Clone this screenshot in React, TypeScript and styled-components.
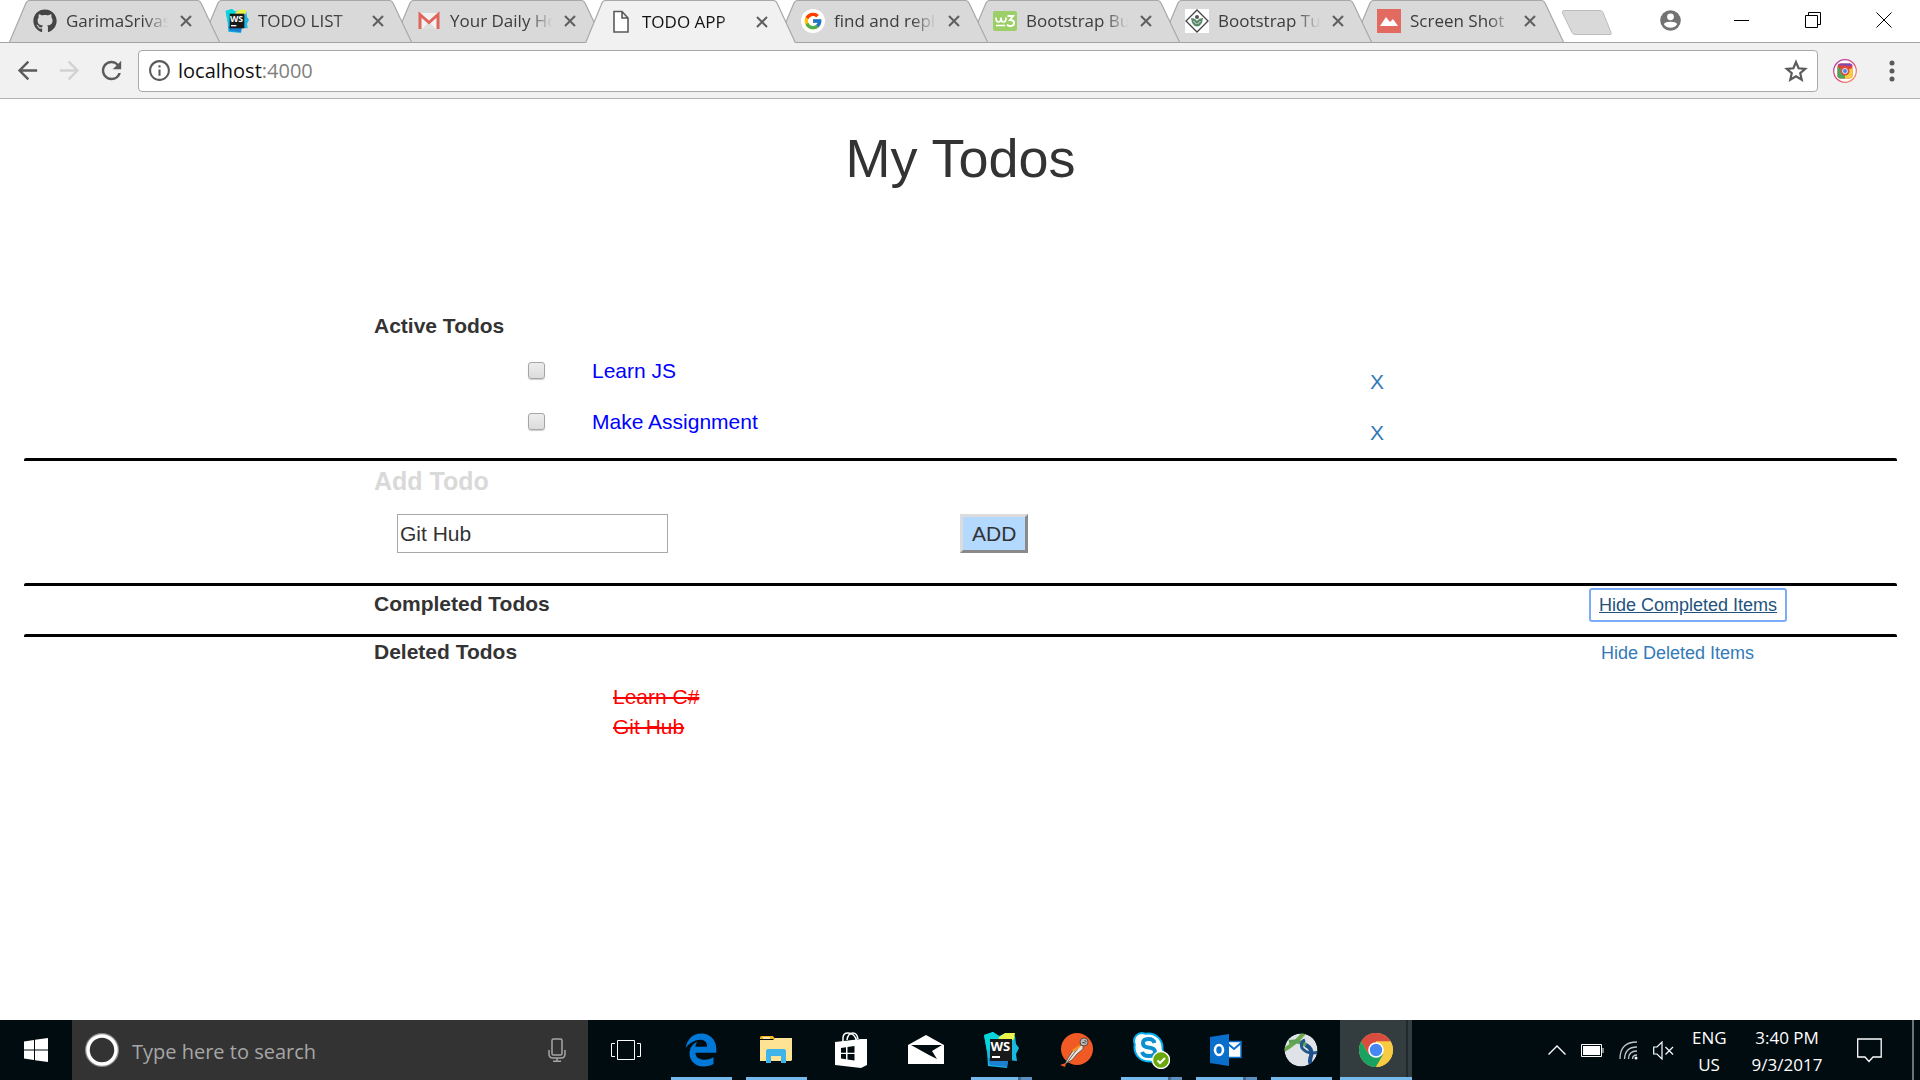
import React, { useState } from "react";
import styled, { createGlobalStyle, css } from "styled-components";
import { MdArrowBack, MdArrowForward, MdInfoOutline, MdRefresh } from "react-icons/md";
import { FaGithub, FaEdgeLegacy } from "react-icons/fa6";
import { FcGoogle } from "react-icons/fc";

const GlobalStyle = createGlobalStyle`
  *, *::before, *::after { box-sizing: border-box; }
  body {
    margin: 0;
    background: #fff;
    color: #333;
    font: 21px/30px "Liberation Sans", Arial, sans-serif;
  }
  button, input { font: inherit; color: inherit; margin: 0; }
`;

const uiFont = `"Open Sans", "Segoe UI", sans-serif`;

const Desktop = styled.div`
  display: flex;
  flex-direction: column;
  min-height: 100vh;
`;

/* ---------- browser chrome ---------- */

const TabStrip = styled.header`
  display: flex;
  align-items: flex-start;
  height: 43px;
  padding: 0 1px 0 9px;
  background: #fff;
  border-bottom: 1px solid #a3a3a3;
  font-family: ${uiFont};
`;

const TabList = styled.nav`
  display: flex;
  margin-right: 16px;
`;

const TabItem = styled.div<{ $active?: boolean; $order: number }>`
  position: relative;
  z-index: ${(p) => (p.$active ? 20 : p.$order)};
  display: flex;
  align-items: center;
  width: 211px;
  height: ${(p) => (p.$active ? 43 : 42)}px;
  margin-right: -19px;
  padding: 0 22px 0 24px;
  color: ${(p) => (p.$active ? "#111" : "#3c3c3c")};
`;

const TabShape = styled.svg`
  position: absolute;
  inset: 0;
  z-index: -1;
  width: 100%;
  height: 100%;
`;

const TabIcon = styled.span`
  display: flex;
  width: 24px;
  height: 24px;
  margin-right: 9px;
  svg { width: 24px; height: 24px; }
`;

const TabTitle = styled.a`
  flex: 1;
  height: 24px;
  color: inherit;
  font-size: 17px;
  line-height: 24px;
  text-decoration: none;
  white-space: nowrap;
  mask-image: linear-gradient(to right, #000 72%, transparent 95%);
`;

const TabClose = styled.button`
  display: flex;
  align-items: center;
  justify-content: center;
  width: 24px;
  height: 24px;
  padding: 0;
  border: 0;
  background: none;
`;

const NewTab = styled.button`
  width: 52px;
  height: 26px;
  margin-top: 10px;
  padding: 0;
  border: 0;
  background: none;
  svg { display: block; }
`;

const WindowControls = styled.div`
  display: flex;
  align-items: center;
  height: 40px;
  margin-left: auto;
`;

const WindowButton = styled.button`
  display: flex;
  align-items: center;
  justify-content: center;
  width: 71px;
  height: 40px;
  padding: 0;
  border: 0;
  background: none;
`;

const Toolbar = styled.div`
  display: flex;
  align-items: center;
  height: 56px;
  padding: 0 4px 0 12px;
  background: #f1f1f1;
  border-bottom: 1px solid #b3b3b3;
  font-family: ${uiFont};
`;

const ToolButton = styled.button<{ $faded?: boolean; $width?: number }>`
  display: flex;
  align-items: center;
  justify-content: center;
  width: ${(p) => p.$width ?? 30}px;
  height: 30px;
  margin-right: 12px;
  padding: 0;
  border: 0;
  background: none;
  color: ${(p) => (p.$faded ? "#d2d2d2" : "#5a5a5a")};
`;

const AddressBar = styled.div`
  display: flex;
  flex: 1;
  align-items: center;
  height: 42px;
  padding: 0 8px;
  margin-right: 4px;
  background: #fff;
  border: 1px solid #a9a9a9;
  border-radius: 4px;
  color: #5a5a5a;
  a {
    flex: 1;
    margin-left: 6px;
    color: #808080;
    font-size: 20px;
    text-decoration: none;
  }
  b { color: #111; font-weight: 400; }
  button { display: flex; padding: 0; border: 0; background: none; }
`;

/* ---------- page ---------- */

const Page = styled.main`
  flex: 1;
  padding: 29px 23px 0 24px;
`;

const PageTitle = styled.h1`
  margin: 0 0 123px;
  font-size: 54px;
  font-weight: 400;
  line-height: 60px;
  text-align: center;
`;

const Section = styled.section<{ $ruled?: boolean; $space?: number }>`
  padding-bottom: ${(p) => p.$space ?? 0}px;
  ${(p) =>
    p.$ruled &&
    css`
      &::before {
        content: "";
        display: block;
        height: 3px;
        border-radius: 2px 2px 0 0;
        background: #000;
      }
    `}
`;

const SectionHead = styled.div<{ $top?: number }>`
  display: grid;
  grid-template-columns: 350fr 1225fr 298fr;
  align-items: baseline;
  height: ${(p) => 45 + (p.$top ?? 0)}px;
  padding-top: ${(p) => p.$top ?? 0}px;
`;

const SectionTitle = styled.h2<{ $muted?: boolean }>`
  grid-column: 2;
  margin: 0;
  font-size: ${(p) => (p.$muted ? 25 : 21)}px;
  font-weight: 700;
  line-height: ${(p) => (p.$muted ? 34 : 30)}px;
  color: ${(p) => (p.$muted ? "#d9d9d9" : "#333")};
`;

const ToggleLink = styled.a<{ $focused?: boolean }>`
  justify-self: start;
  padding: 0 8px;
  margin-left: ${(p) => (p.$focused ? -8 : -6)}px;
  border-radius: 1px;
  font-size: 18px;
  color: ${(p) => (p.$focused ? "#23527c" : "#337ab7")};
  text-decoration: ${(p) => (p.$focused ? "underline" : "none")};
  outline: ${(p) => (p.$focused ? "2px solid #7cacf8" : "none")};
`;

const List = styled.ul`
  margin: 0;
  padding: 0;
  list-style: none;
`;

const TodoRow = styled.li`
  display: grid;
  grid-template-columns: 504fr 64fr 778fr 527fr;
  align-items: start;
  height: 51px;
`;

const Check = styled.input`
  grid-column: 2;
  appearance: none;
  width: 17px;
  height: 17px;
  margin-top: 6px;
  border: 1px solid #a6a6a6;
  border-radius: 3px;
  background: linear-gradient(#ededed, #dcdcdc);
  box-shadow: 0 1px 1px #0003;
  &:checked { background: #777; }
`;

const TodoText = styled.label`
  justify-self: start;
  color: #00f;
`;

const RemoveLink = styled.a`
  justify-self: start;
  margin-top: 11px;
  color: #337ab7;
  text-decoration: none;
`;

const AddForm = styled.form`
  display: grid;
  grid-template-columns: 373fr 271fr 292fr 937fr;
  padding-top: 5px;
`;

const TextBox = styled.input`
  grid-column: 2;
  width: 100%;
  height: 39px;
  padding: 1px 2px;
  border: 1px solid #a9a9a9;
  background: #fff;
`;

const AddButton = styled.button`
  grid-column: 4;
  justify-self: start;
  height: 39px;
  padding: 0 9px;
  border: 3px solid;
  border-color: #dcdcdc #8a8a8a #8a8a8a #dcdcdc;
  background: #b3d9ff;
`;

const DeletedItem = styled.li`
  display: grid;
  grid-template-columns: 589fr 1284fr;
  del { grid-column: 2; color: #f00; }
`;

/* ---------- taskbar ---------- */

const Taskbar = styled.footer`
  display: flex;
  height: 60px;
  background: #000c10;
  color: #fff;
  font-family: ${uiFont};
`;

const StartButton = styled.button`
  display: flex;
  align-items: center;
  justify-content: center;
  width: 72px;
  padding: 0;
  border: 0;
  background: none;
`;

const SearchBox = styled.label`
  display: flex;
  align-items: center;
  width: 516px;
  padding: 0 22px 0 12px;
  background: #333;
  input {
    flex: 1;
    min-width: 0;
    margin: 3px 12px 0;
    padding: 0;
    border: 0;
    outline: 0;
    background: none;
    font-size: 20px;
  }
  input::placeholder { color: #a6a6a6; opacity: 1; }
`;

const Apps = styled.div`
  display: flex;
  gap: 3px;
  padding-left: 2px;
`;

const AppButton = styled.button<{ $running?: boolean; $stacked?: boolean; $current?: boolean }>`
  display: flex;
  align-items: center;
  justify-content: center;
  width: 72px;
  padding: 0;
  border: 0;
  background: ${(p) => (p.$current ? "linear-gradient(to right, #333d40 66px, #22292c 66px, #22292c 68px, #333d40 68px)" : "none")};
  &::after {
    content: "";
    align-self: flex-end;
    height: 3px;
    width: ${(p) => (p.$current ? 72 : 61)}px;
    margin-left: -${(p) => (p.$current ? 72 : 66)}px;
    margin-right: ${(p) => (p.$current ? 0 : 5)}px;
    flex: none;
    background: ${(p) =>
      !p.$running ? "none" : p.$stacked ? "linear-gradient(to right, #76b9ed 47px, #42688a 47px, #42688a 50px, #5b8fbd 50px)" : "#76b9ed"};
  }
`;

const AppGlyph = styled.span`
  display: flex;
  justify-content: center;
  width: 72px;
  flex: none;
`;

const Tray = styled.div`
  display: flex;
  align-items: center;
  margin-left: auto;
  button { display: flex; padding: 0; border: 0; background: none; }
`;

const TrayIcons = styled.div`
  display: flex;
  align-items: center;
  gap: 15px;
  margin-right: 18px;
`;

const TrayText = styled.div<{ $wide?: boolean }>`
  width: ${(p) => (p.$wide ? 122 : 34)}px;
  margin-right: ${(p) => (p.$wide ? 9 : 0)}px;
  padding-top: 2px;
  font-size: 17px;
  line-height: 27px;
  text-align: center;
`;

const DesktopPeek = styled.div`
  align-self: stretch;
  width: 8px;
  margin-left: 30px;
  border-left: 2px solid #6c7375;
`;

/* ---------- drawings ---------- */

const WebStorm = ({ size = 36 }: { size?: number }) => (
  <svg width={size} height={size} viewBox="0 0 36 36">
    <path d="M1 3 10 0l6 4 7-3 9 3 1 8 3 4-3 6 1 7-9-1-1 8-19-2L4 20z" fill="#18b8e0" />
    <path d="M1 3 10 0l6 4-3 10-9 5z" fill="#07d5dc" />
    <path d="m16 5 6-4 10 0-1 6-8 6-9-1z" fill="#e9f34b" />
    <path d="m5 26 20 2-1 7-17-2z" fill="#1b7fd2" />
    <rect x="7" y="7" width="22" height="22" fill="#1a1a1a" />
    <text x="7.500" y="19" fill="#fff" fontFamily="Open Sans, sans-serif" fontWeight="700" fontSize="13">WS</text>
    <path d="M9 25h8" stroke="#fff" strokeWidth="2" />
  </svg>
);

const Gmail = () => (
  <svg viewBox="0 0 24 24">
    <path d="M2 4h20v16H2z" fill="#f2f2f2" />
    <path d="m5 20 7-7 7 7z" fill="#dedede" />
    <path d="M3 20V5.500L12 13.500 21 5.500V20" fill="none" stroke="#e0655b" strokeWidth="3" />
  </svg>
);

const PageFile = () => (
  <svg viewBox="0 0 24 24">
    <path d="M5 1.500h8l6 6.500v14H5zM13 1.500V8h6" fill="#fff" stroke="#5a5a5a" strokeWidth="1.600" />
  </svg>
);

const GoogleBadge = () => (
  <svg viewBox="0 0 24 24">
    <circle cx="12" cy="12" r="12" fill="#fff" />
    <FcGoogle x="2" y="2" size={20} style={{ width: 20, height: 20 }} />
  </svg>
);

const W3 = () => (
  <svg viewBox="0 0 24 24">
    <rect y="2" width="24" height="20" rx="2" fill="#9ccf68" />
    <path d="M3 8.500q0 4.500 2.500 4.500T8 8.500q0 4.500 2.500 4.500T13 8.500M3 16.500h9" fill="none" stroke="#fff" strokeWidth="1.700" />
    <path d="M14.500 7h5.500l-3 4q4 0 4 3t-4 3q-2 0-3-1.500" fill="none" stroke="#fff" strokeWidth="2" />
  </svg>
);

const TutorialDiamond = () => (
  <svg viewBox="0 0 24 24">
    <path d="M0 0h24v24H0z" fill="#fff" />
    <path d="M12 1 23 12 12 23 1 12z" fill="#fff" stroke="#444" strokeWidth="1.300" />
    <path d="M6 9q4 0 6 3 2-3 6-3-1 8.500-6 8.500T6 9z" fill="#5b8a6b" />
    <circle cx="12" cy="8" r="2" fill="#555" />
    <path d="M8.500 12l3 3M15.500 12l-3 3" stroke="#fff" strokeWidth=".8" />
  </svg>
);

const Screenshot = () => (
  <svg viewBox="0 0 24 24">
    <path d="M0 0h24v24H0z" fill="#e36a60" />
    <path d="M3 17 9 8l4 5 3-3 5 7z" fill="#fff" />
  </svg>
);

const Star = () => (
  <svg width="26" height="26" viewBox="0 0 24 24">
    <path
      d="m12 3.800 2.400 5.700 6.100.5-4.600 4 1.400 6-5.300-3.200L6.700 20l1.400-6-4.600-4 6.100-.5z"
      fill="none"
      stroke="#5a5a5a"
      strokeWidth="2"
    />
  </svg>
);

const Avatar = () => (
  <svg width="21" height="21" viewBox="0 0 21 21">
    <circle cx="10.500" cy="10.500" r="10.300" fill="#737373" />
    <circle cx="10.500" cy="6.800" r="3.400" fill="#fff" />
    <path d="M4 14.500q0-2.800 6.500-2.800t6.500 2.800q-2.500 3.300-6.500 3.300T4 14.500z" fill="#fff" />
  </svg>
);

const Instagram = () => (
  <svg width="24" height="24" viewBox="0 0 24 24">
    <defs>
      <linearGradient id="ring" x1="0" x2="1" y1="0" y2="1">
        <stop offset="0" stopColor="#a93aa8" />
        <stop offset=".5" stopColor="#e0457b" />
        <stop offset="1" stopColor="#f5a35c" />
      </linearGradient>
    </defs>
    <circle cx="12" cy="12" r="11.300" fill="#fff" stroke="url(#ring)" strokeWidth="1.200" />
    <rect x="4.500" y="4.500" width="15" height="15" rx="3" fill="#de4639" />
    <path d="M4.500 8v8.500q0 3 3 3H12V12z" fill="#4ba85a" />
    <path d="M19.500 9v7.500q0 3-3 3H12V12z" fill="#f8ce3c" />
    <path d="M5 6q1-1.500 3-1.500h9q2 0 2.500 2.500z" fill="#7a4ac0" />
    <circle cx="12" cy="12" r="4.500" fill="#e0503f" />
    <circle cx="12" cy="12" r="2.500" fill="#4b86e8" stroke="#fff" strokeWidth=".8" />
  </svg>
);

const Folder = () => (
  <svg width="32" height="28" viewBox="0 0 32 28">
    <path d="M0 1.500Q0 0 1.500 0H13l2 3H0z" fill="#f5b81c" />
    <path d="M0 4h13l2-2h17v22l-1 1H0z" fill="#ffe394" />
    <path d="M3 2h7" stroke="#fff" strokeWidth="1.300" />
    <path d="M6 27V15q0-2 2-2h16q2 0 2 2v12h-5v-7H11v7z" fill="#3eb4e8" />
  </svg>
);

const Store = () => (
  <svg width="32" height="36" viewBox="0 0 32 36">
    <path d="M8 10V6q0-5 5-5 7 0 9 9M12 8q1-7 6-7 4 0 5 6" fill="none" stroke="#fff" strokeWidth="1.500" />
    <path d="m0 10 26-3 6 0v26l-6 3L0 33z" fill="#fff" />
    <path d="m6 16 5-.7v5.400H6zm6.500-1 7-1v6.700h-7zM6 22h5v5.300l-5-.8zm6.500 0h7v6.500l-7-1z" fill="#000c10" />
  </svg>
);

const Mail = () => (
  <svg width="36" height="30" viewBox="0 0 36 30">
    <path d="M18 0 36 10v19H0V10z" fill="#fff" />
    <path d="M3 10h31l-10 6 5 8-8-4z" fill="#000c10" />
  </svg>
);

const Postman = () => (
  <svg width="33" height="34" viewBox="0 0 33 34">
    <circle cx="17" cy="16" r="16" fill="#f15a24" />
    <path d="m23 11-9 5-6 9-3 6 7-4 5-6 6-5z" fill="#e8e2dc" stroke="#554b46" strokeWidth=".8" />
    <path d="m19 14-8 10-4 6" fill="none" stroke="#6f625b" />
    <path d="m19 12-7 5 2 2 7-6z" fill="#f7931e" />
    <circle cx="24" cy="9" r="4" fill="#bdb8b4" stroke="#3d3835" strokeWidth=".8" />
    <path d="m22.500 9.500 3 .5M24.500 7l2 2" stroke="#333" />
    <path d="m0 32 6-2-1 4z" fill="#f15a24" />
  </svg>
);

const Skype = () => (
  <svg width="38" height="38" viewBox="0 0 38 38">
    <circle cx="10" cy="10" r="9" fill="#00aff0" />
    <circle cx="23" cy="23" r="9.500" fill="#00aff0" />
    <circle cx="16.500" cy="16.500" r="15" fill="#00aff0" />
    <circle cx="10" cy="10" r="7" fill="#fff" />
    <circle cx="22" cy="22" r="8.500" fill="#fff" />
    <circle cx="16.500" cy="16.500" r="13" fill="#fff" />
    <path d="M22.500 12q-1-4-6-4-5.500 0-5.500 4t5.500 4.500Q23 17 23 21t-6.500 4q-5 0-6.500-4" fill="none" stroke="#0b8fd0" strokeWidth="4" />
    <circle cx="29" cy="29" r="8.500" fill="#6aa70b" stroke="#fff" strokeWidth="1.400" />
    <path d="m25.500 29.500 2.500 2.500 5-5" fill="none" stroke="#fff" strokeWidth="2" />
  </svg>
);

const Outlook = () => (
  <svg width="32" height="32" viewBox="0 0 32 32">
    <path d="M16 7.500h15v16H16z" fill="#fff" stroke="#0a6fcb" strokeWidth="1.500" />
    <path d="m17 9 7 6 7-6" fill="none" stroke="#0a6fcb" strokeWidth="2" />
    <path d="M0 3 19 0v32L0 29z" fill="#0a6fcb" />
    <ellipse cx="9" cy="16" rx="4" ry="5" fill="none" stroke="#fff" strokeWidth="2.600" />
  </svg>
);

const Cisco = () => (
  <svg width="34" height="34" viewBox="0 0 34 34">
    <defs>
      <clipPath id="globe"><circle cx="17" cy="17" r="16.500" /></clipPath>
    </defs>
    <g clipPath="url(#globe)">
      <circle cx="17" cy="17" r="16.500" fill="#dfe2e6" />
      <path d="M0 17Q12 10 20 0" fill="none" stroke="#69a84c" strokeWidth="4" />
      <path d="M5 9q13-2 19 5" fill="none" stroke="#5fa157" strokeWidth="4" />
      <path d="M35 19q-12 3-17-4-2-6 3-8" fill="none" stroke="#25588c" strokeWidth="3" />
      <path d="M22 12q7 4 5 11-2 5 0 9" fill="none" stroke="#1d4f8a" strokeWidth="4" />
    </g>
  </svg>
);

const Chrome = () => (
  <svg width="34" height="34" viewBox="0 0 34 34">
    <circle cx="17" cy="17" r="17" fill="#f7cb42" />
    <path d="M17 17V0A17 17 0 0 0 2.300 8.500L9.600 21.300z" fill="#d84d3f" />
    <path d="M2.300 8.500A17 17 0 0 1 31.700 8.500H17z" fill="#d84d3f" />
    <path d="M2.300 8.500 9.600 21.300 24.400 21.300 17 34A17 17 0 0 1 2.300 8.500z" fill="#1aa260" />
    <path d="M31.700 8.500H17l7.400 12.800L17 34A17 17 0 0 0 31.700 8.500z" fill="#f7cb42" />
    <circle cx="17" cy="17" r="7.800" fill="#fff" />
    <circle cx="17" cy="17" r="6.200" fill="#4587f3" />
  </svg>
);

const TaskView = () => (
  <svg width="32" height="20" viewBox="0 0 32 20">
    <path d="M7.500.5h17v19h-17zM5 3.500H1.500v13H5M27 3.500h3.500v13H27" fill="none" stroke="#fff" />
  </svg>
);

/* ---------- data ---------- */

const tabs = [
  { title: "GarimaSrivas", icon: <FaGithub color="#444" /> },
  { title: "TODO LIST", icon: <WebStorm size={24} /> },
  { title: "Your Daily Ho", icon: <Gmail /> },
  { title: "TODO APP", icon: <PageFile />, active: true },
  { title: "find and repl", icon: <GoogleBadge /> },
  { title: "Bootstrap Bu", icon: <W3 /> },
  { title: "Bootstrap Tu", icon: <TutorialDiamond /> },
  { title: "Screen Shot", icon: <Screenshot /> },
];

const apps = [
  { name: "Task view", icon: <TaskView /> },
  { name: "Edge", icon: <FaEdgeLegacy size={34} color="#0078d7" />, running: true },
  { name: "File Explorer", icon: <Folder />, running: true },
  { name: "Store", icon: <Store /> },
  { name: "Mail", icon: <Mail /> },
  { name: "WebStorm", icon: <WebStorm />, running: true, stacked: true },
  { name: "Postman", icon: <Postman /> },
  { name: "Skype", icon: <Skype />, running: true, stacked: true },
  { name: "Outlook", icon: <Outlook />, running: true, stacked: true },
  { name: "AnyConnect", icon: <Cisco />, running: true },
  { name: "Chrome", icon: <Chrome />, running: true, current: true },
];

const activeTodos = ["Learn JS", "Make Assignment"];
const deletedTodos = ["Learn C#", "Git Hub"];

function BrowserBar() {
  return (
    <>
      <TabStrip>
        <TabList>
          {tabs.map((tab, i) => (
            <TabItem key={tab.title} $active={tab.active} $order={tabs.length - i}>
              <TabShape viewBox="0 0 211 43" preserveAspectRatio="none">
                <path
                  d="M.5 43 L17 3 Q18 .5 21 .5 H188 Q191 .5 192 3 L210.500 43"
                  fill={tab.active ? "#f1f1f1" : "#d9d9d9"}
                  stroke="#a8a8a8"
                  strokeWidth="1.200"
                />
              </TabShape>
              <TabIcon>{tab.icon}</TabIcon>
              <TabTitle href="#">{tab.title}</TabTitle>
              <TabClose aria-label={`Close ${tab.title}`}>
                <svg width="12" height="12" viewBox="0 0 12 12">
                  <path d="m1 1 10 10M11 1 1 11" stroke="#5f5f5f" strokeWidth="2" />
                </svg>
              </TabClose>
            </TabItem>
          ))}
        </TabList>
        <NewTab aria-label="New tab">
          <svg width="52" height="26" viewBox="0 0 52 26">
            <path d="M3 .5h36q2 0 3 2l8 20q1 2-1 2H14q-2 0-3-2L1.500 3Q1 .5 3 .5z" fill="#d9d9d9" stroke="#bcbcbc" />
          </svg>
        </NewTab>
        <WindowControls>
          <WindowButton aria-label="Profile"><Avatar /></WindowButton>
          <WindowButton aria-label="Minimize">
            <svg width="16" height="16"><path d="M0 8.500h15" stroke="#000" /></svg>
          </WindowButton>
          <WindowButton aria-label="Restore">
            <svg width="16" height="16">
              <path d="M.5 3.500h12v12H.5zM3.500 3V.5h12v12H13" fill="none" stroke="#000" />
            </svg>
          </WindowButton>
          <WindowButton aria-label="Close window">
            <svg width="16" height="16"><path d="m.5.5 15 15M15.500.5l-15 15" stroke="#000" /></svg>
          </WindowButton>
        </WindowControls>
      </TabStrip>
      <Toolbar>
        <ToolButton aria-label="Back"><MdArrowBack size={29} /></ToolButton>
        <ToolButton aria-label="Forward" $faded><MdArrowForward size={29} /></ToolButton>
        <ToolButton aria-label="Reload"><MdRefresh size={29} /></ToolButton>
        <AddressBar>
          <MdInfoOutline size={25} />
          <a href="#"><b>localhost</b>:4000</a>
          <button aria-label="Bookmark"><Star /></button>
        </AddressBar>
        <ToolButton aria-label="Extension" $width={46}><Instagram /></ToolButton>
        <ToolButton aria-label="Menu" $width={24}>
          <svg width="6" height="22" fill="#5a5a5a">
            <circle cx="3" cy="3" r="2.500" /><circle cx="3" cy="11" r="2.500" /><circle cx="3" cy="19" r="2.500" />
          </svg>
        </ToolButton>
      </Toolbar>
    </>
  );
}

function TodoPage() {
  const [draft, setDraft] = useState("Git Hub");
  return (
    <Page>
      <PageTitle>My Todos</PageTitle>
      <Section>
        <SectionHead><SectionTitle>Active Todos</SectionTitle></SectionHead>
        <List>
          {activeTodos.map((todo, i) => (
            <TodoRow key={todo}>
              <Check type="checkbox" id={`todo-${i}`} />
              <TodoText htmlFor={`todo-${i}`}>{todo}</TodoText>
              <RemoveLink href="#">X</RemoveLink>
            </TodoRow>
          ))}
        </List>
      </Section>
      <Section $ruled $space={30}>
        <SectionHead $top={3}><SectionTitle $muted id="add-title">Add Todo</SectionTitle></SectionHead>
        <AddForm onSubmit={(e) => e.preventDefault()}>
          <TextBox type="text" aria-labelledby="add-title" value={draft} onChange={(e) => setDraft(e.target.value)} />
          <AddButton type="submit">ADD</AddButton>
        </AddForm>
      </Section>
      <Section $ruled>
        <SectionHead $top={3}>
          <SectionTitle>Completed Todos</SectionTitle>
          <ToggleLink href="#" $focused>Hide Completed Items</ToggleLink>
        </SectionHead>
      </Section>
      <Section $ruled>
        <SectionHead>
          <SectionTitle>Deleted Todos</SectionTitle>
          <ToggleLink href="#">Hide Deleted Items</ToggleLink>
        </SectionHead>
        <List>
          {deletedTodos.map((todo) => (
            <DeletedItem key={todo}><del>{todo}</del></DeletedItem>
          ))}
        </List>
      </Section>
    </Page>
  );
}

function WindowsTaskbar() {
  return (
    <Taskbar>
      <StartButton aria-label="Start">
        <svg width="24" height="24" fill="#fff">
          <path d="M0 3.400 10 2v9.500H0zM11 1.800 24 0v11.500H11zM0 12.500h10V22L0 20.600zM11 12.500h13V24l-13-1.800z" />
        </svg>
      </StartButton>
      <SearchBox>
        <svg width="36" height="36">
          <circle cx="18" cy="18" r="16" fill="none" stroke="#8a8a8a" strokeWidth="2" />
          <circle cx="18" cy="18" r="14" fill="none" stroke="#fff" strokeWidth="3.500" />
        </svg>
        <input type="text" placeholder="Type here to search" aria-label="Type here to search" />
        <svg width="18" height="24" fill="none" stroke="#a6a6a6" strokeWidth="1.500">
          <rect x="4" y="1" width="10" height="16" rx="1.500" />
          <path d="M1 12v4q0 4 4 4h8q4 0 4-4v-4M9 20v3M5 23.200h8" />
        </svg>
      </SearchBox>
      <Apps>
        {apps.map((app) => (
          <AppButton key={app.name} aria-label={app.name} $running={app.running} $stacked={app.stacked} $current={app.current}>
            <AppGlyph>{app.icon}</AppGlyph>
          </AppButton>
        ))}
      </Apps>
      <Tray>
        <TrayIcons>
          <button aria-label="Show hidden icons">
            <svg width="18" height="10"><path d="m.5 9.500 8.500-8.500 8.500 8.500" fill="none" stroke="#fff" strokeWidth="1.400" /></svg>
          </button>
          <svg width="23" height="13">
            <path d="M.5.5h20v12H.5zM22 4v5" fill="none" stroke="#fff" />
            <path d="M2 2h17v9H2z" fill="#fff" />
          </svg>
          <svg width="19" height="19" fill="none" stroke="#bfc4c6" strokeWidth="1.300">
            <path d="M1 18Q1 1 18 1M5.500 18Q6 6 18 6M9.500 18q0-8 8.500-8M13.500 18q0-4 4.500-4" />
            <circle cx="17" cy="17" r="1.500" fill="#fff" stroke="none" />
          </svg>
          <svg width="21" height="19" fill="none" stroke="#fff" strokeWidth="1.200">
            <path d="M.7 6H4l5-5v17l-5-5H.7zM12.500 6l7.500 7.500M20 6l-7.500 7.500" />
          </svg>
        </TrayIcons>
        <TrayText>ENG<br />US</TrayText>
        <TrayText $wide>3:40 PM<br />9/3/2017</TrayText>
        <button aria-label="Notifications">
          <svg width="25" height="25">
            <path d="M.7 1h23.500v18H16l-4 4.500L8 19H.7z" fill="none" stroke="#fff" strokeWidth="1.300" />
          </svg>
        </button>
        <DesktopPeek />
      </Tray>
    </Taskbar>
  );
}

export default function App() {
  return (
    <Desktop>
      <GlobalStyle />
      <BrowserBar />
      <TodoPage />
      <WindowsTaskbar />
    </Desktop>
  );
}
